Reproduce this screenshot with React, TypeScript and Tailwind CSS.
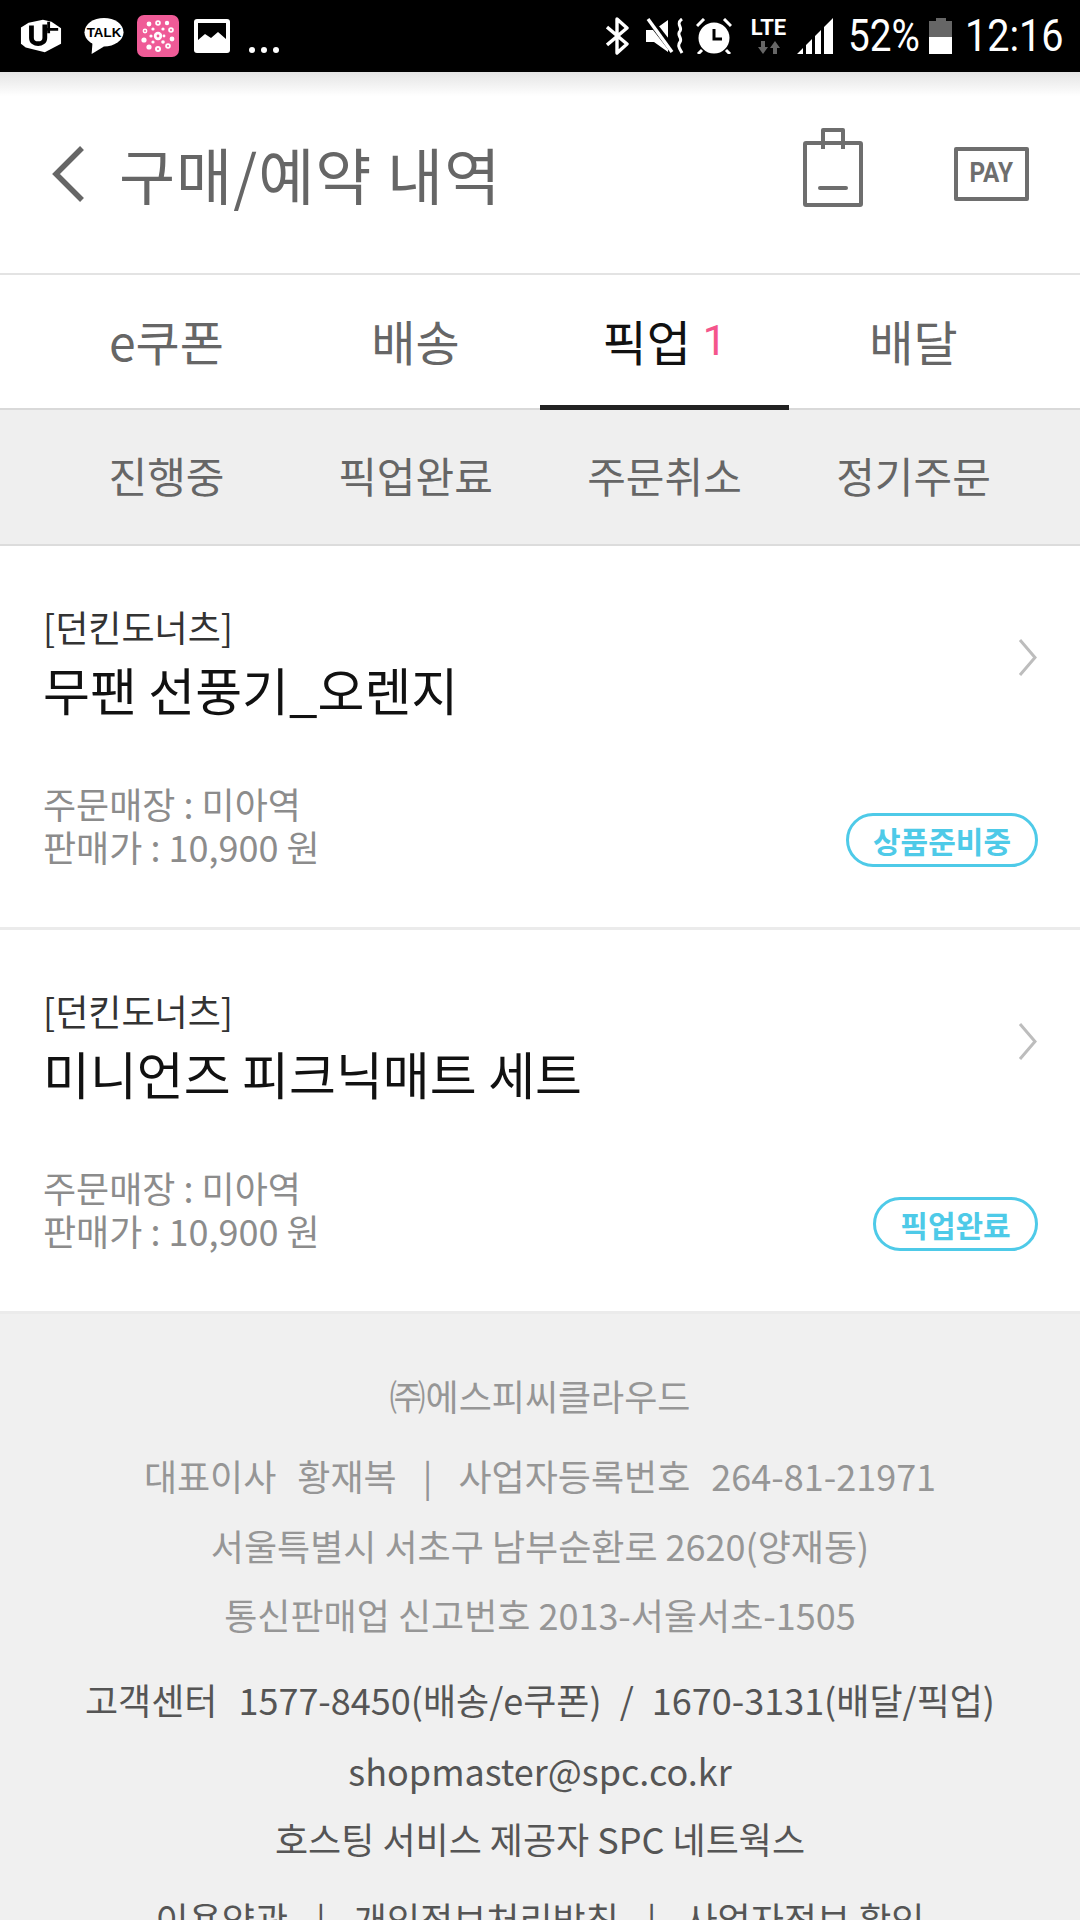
const font = { fontFamily: '"Noto Sans CJK KR", "Noto Sans", sans-serif' };
const roboto = { fontFamily: '"Roboto", sans-serif' };

const flowers: [number, number, number][] = [
  [21, 21, 4.2], [21, 8, 2.8], [30, 8, 2.2], [12, 9, 2.4], [34, 15, 2.8], [8, 16, 2.4],
  [35, 24, 2.4], [7, 25, 2.6], [31, 31, 2.8], [12, 32, 2.6], [21, 34, 3], [27, 21, 1.4], [14, 21, 1.6],
  [26, 14, 1.6], [16, 14, 1.6], [26, 27, 1.8], [16, 27, 1.6],
];

const StatusBar = () => (
  <div className="h-[72px] bg-black flex items-center justify-between pl-[20px] pr-[17px] text-white">
    <div className="flex items-center">
      <svg width="42" height="36" viewBox="0 0 44 36" fill="none">
        <path d="M9 4 L24 1 L33 3 L43 10 V26 L26 35 L6 30 L1 26 V9 Z" fill="#fff" />
        <path d="M12 7 V20 C12 28 26 28 26 20 V6" stroke="#000" strokeWidth="5" fill="none" />
        <path d="M30 3 V15 M27 11 H40" stroke="#000" strokeWidth="3" />
      </svg>
      <svg className="ml-[22px]" width="40" height="38" viewBox="0 0 42 38">
        <ellipse cx="21" cy="15" rx="20.5" ry="15" fill="#fff" />
        <path d="M9 25 L8 38 L21 30 Z" fill="#fff" />
        <text x="21" y="20" textAnchor="middle" fontSize="14" fontWeight="700" fill="#000" fontFamily="Liberation Sans">TALK</text>
      </svg>
      <div className="ml-[13px] w-[42px] h-[42px] rounded-[7px] bg-[#ef5b97]">
        <svg width="42" height="42" viewBox="0 0 42 42" fill="#fff">
          {flowers.map(([cx, cy, r]) => (
            <circle key={`${cx}-${cy}`} cx={cx} cy={cy} r={r} />
          ))}
          <circle cx="21" cy="21" r="1.4" fill="#ef5b97" />
          <circle cx="21" cy="8" r="1" fill="#ef5b97" />
          <circle cx="34" cy="15" r="1" fill="#ef5b97" />
          <circle cx="31" cy="31" r="1" fill="#ef5b97" />
          <circle cx="21" cy="34" r="1" fill="#ef5b97" />
          <circle cx="8" cy="16" r="0.9" fill="#ef5b97" />
        </svg>
      </div>
      <svg className="ml-[15px]" width="36" height="34" viewBox="0 0 36 34">
        <rect x="0" y="0" width="36" height="34" rx="3" fill="#fff" />
        <path d="M4 4 H32 V20 L24 13 L17 19 L11 15 L4 21 Z" fill="#000" />
      </svg>
      <div className="ml-[19px] mt-[28px] flex gap-[6px]">
        <span className="w-[6px] h-[6px] rounded-full bg-white" />
        <span className="w-[6px] h-[6px] rounded-full bg-white" />
        <span className="w-[6px] h-[6px] rounded-full bg-white" />
      </div>
    </div>
    <div className="flex items-center">
      <svg width="23" height="38" viewBox="0 0 23 38" fill="none" stroke="#fff" strokeWidth="3.4" strokeLinejoin="round">
        <path d="M1 10 L21 27 L11 36 V2 L21 11 L1 28" />
      </svg>
      <svg className="ml-[17px]" width="38" height="36" viewBox="0 0 38 36">
        <path d="M0 12 H8 L22 2 V34 L8 24 H0 Z" fill="#fff" />
        <path d="M3 1 L27 32" stroke="#000" strokeWidth="7" />
        <path d="M2 1 L26 34" stroke="#fff" strokeWidth="3.4" />
        <path d="M36 1 C29 6 37 9 34 13 C30 17 37 20 34 24 C31 28 34 31 36 35" stroke="#fff" strokeWidth="3" fill="none" />
      </svg>
      <svg className="ml-[12px]" width="36" height="36" viewBox="0 0 36 36" fill="none">
        <circle cx="18" cy="20" r="15.5" fill="#fff" />
        <path d="M18 11 V21 H26" stroke="#000" strokeWidth="3" />
        <path d="M1 8 L8 1 M35 8 L28 1 M6 32 L2 36 M30 32 L34 36" stroke="#fff" strokeWidth="3" />
      </svg>
      <div className="ml-[17px] w-[39px] flex flex-col items-center">
        <span className="text-[22px] leading-[20px] font-bold" style={roboto}>LTE</span>
        <svg className="mt-[3px]" width="22" height="13" viewBox="0 0 22 13" fill="#666">
          <path d="M3 0 H7 V6 H10 L5 13 L0 6 H3 Z M15 13 H19 V7 H22 L17 0 L12 7 H15 Z" />
        </svg>
      </div>
      <svg className="ml-[9px]" width="36" height="36" viewBox="0 0 36 36" fill="#fff">
        <path d="M0 36 L6 30 V36 Z M9 27 L15 21 V36 H9 Z M18 18 L24 12 V36 H18 Z M27 9 L36 0 V36 H27 Z" />
      </svg>
      <div className="ml-[15px] w-[71px]">
        <span className="block origin-left scale-x-[0.88] text-[44px] leading-none whitespace-nowrap" style={roboto}>52%</span>
      </div>
      <div className="ml-[10px] w-[23px] h-[36px] flex flex-col items-center">
        <div className="w-[10px] h-[3px] bg-[#666]" />
        <div className="w-[23px] h-[16px] bg-[#666]" />
        <div className="w-[23px] h-[17px] bg-white" />
      </div>
      <div className="ml-[13px] w-[98px]">
        <span className="block origin-left scale-x-[0.9] text-[44px] leading-none whitespace-nowrap" style={roboto}>12:16</span>
      </div>
    </div>
  </div>
);

const Header = () => (
  <div className="h-[203px] bg-gradient-to-b from-[#e4e4e4] via-white via-[12%] to-white border-b-2 border-[#e3e3e3] flex items-center pl-[51px] pr-[51px] pt-[2px]">
    <svg width="34" height="56" viewBox="0 0 34 56" fill="none" stroke="#666" strokeWidth="5.5">
      <path d="M31 2 L5 28 L31 54" />
    </svg>
    <h1 className="ml-[34px] text-[61px] leading-none text-[#666] font-normal tracking-[1px]">구매/예약 내역</h1>
    <svg className="ml-auto -mt-[13px]" width="60" height="79" viewBox="0 0 60 79" fill="none" stroke="#6e6e6e" strokeWidth="4" strokeLinejoin="round">
      <rect x="2" y="15" width="56" height="62" rx="1" />
      <path d="M20 21 V2 H40 V21" />
      <path d="M17 60 H43" strokeLinecap="round" />
    </svg>
    <div className="ml-[91px] w-[75px] h-[54px] border-[4px] border-[#6e6e6e] rounded-[2px] flex items-center justify-center">
      <span className="text-[27px] leading-none font-bold text-[#6e6e6e] scale-x-90" style={roboto}>PAY</span>
    </div>
  </div>
);

const tabs = ["e쿠폰", "배송", "픽업", "배달"];

const Tabs = () => (
  <div className="h-[135px] bg-white border-b-2 border-[#d9d9d9] grid grid-cols-4 px-[42px]">
    {tabs.map((t) =>
      t === "픽업" ? (
        <div key={t} className="h-[135px] pb-[1px] flex items-center justify-center gap-[12px] text-[48px] text-[#111] border-b-[5px] border-[#222]">
          <span>{t}</span>
          <span className="text-[#f4558b] text-[42px] leading-none mt-[2px]" style={roboto}>1</span>
        </div>
      ) : (
        <div key={t} className="pb-[6px] flex items-center justify-center text-[48px] text-[#666]">
          {t}
        </div>
      ),
    )}
  </div>
);

const subTabs = ["진행중", "픽업완료", "주문취소", "정기주문"];

const SubTabs = () => (
  <div className="h-[136px] bg-[#efefef] border-b-2 border-[#dcdcdc] grid grid-cols-4 px-[42px]">
    {subTabs.map((t) => (
      <div key={t} className="pb-[6px] flex items-center justify-center text-[42px] text-[#666]">
        {t}
      </div>
    ))}
  </div>
);

const OrderRow = ({ name, status, pillWidth }: { name: string; status: string; pillWidth: string }) => (
  <div className="h-[384px] bg-white border-b-[3px] border-[#ebebeb] pl-[43px] pr-[42px] pt-[54px]">
    <div className="flex items-start justify-between">
      <div>
        <p className="text-[36px] leading-[52px] text-[#333]">[던킨도너츠]</p>
        <p className="mt-[4px] text-[51px] leading-[66px] text-[#111]">{name}</p>
      </div>
      <svg className="mt-[39px]" width="20" height="37" viewBox="0 0 20 37" fill="none" stroke="#bdbdbd" strokeWidth="3">
        <path d="M2 1 L17 18.5 L2 36" />
      </svg>
    </div>
    <div className="mt-[60px] flex items-end justify-between">
      <div className="text-[36px] leading-[43px] text-[#8c8c8c]">
        <p>주문매장 : 미아역</p>
        <p>판매가 : 10,900 원</p>
      </div>
      <div className={`${pillWidth} h-[54px] rounded-full border-[3px] border-[#4ecae8] flex items-center justify-center text-[#4ecae8] text-[30px] font-bold mb-[1px]`}>
        {status}
      </div>
    </div>
  </div>
);

const Footer = () => (
  <div className="bg-[#f0f0f0] text-center pt-[55px] text-[36px] leading-[52px]">
    <p className="text-[#969696]">㈜에스피씨클라우드</p>
    <p className="mt-[28px] text-[#969696] flex justify-center">
      <span>대표이사</span>
      <span className="ml-[21px]">황재복</span>
      <span className="mx-[26px]">|</span>
      <span>사업자등록번호</span>
      <span className="ml-[21px]">264-81-21971</span>
    </p>
    <p className="mt-[18px] text-[#969696]">서울특별시 서초구 남부순환로 2620(양재동)</p>
    <p className="mt-[17px] text-[#969696]">통신판매업 신고번호 2013-서울서초-1505</p>
    <p className="mt-[33px] text-[#555] flex justify-center">
      <span>고객센터</span>
      <span className="ml-[21px]">1577-8450(배송/e쿠폰)</span>
      <span className="mx-[18px]">/</span>
      <span>1670-3131(배달/픽업)</span>
    </p>
    <p className="mt-[19px] text-[#555]">shopmaster@spc.co.kr</p>
    <p className="mt-[16px] text-[#555]">호스팅 서비스 제공자 SPC 네트웍스</p>
    <p className="mt-[28px] text-[#555] flex justify-center">
      <span>이용약관</span>
      <span className="mx-[28px]">|</span>
      <span>개인정보처리방침</span>
      <span className="mx-[28px]">|</span>
      <span>사업자정보 확인</span>
    </p>
  </div>
);

export default function App() {
  return (
    <div className="w-[1080px] h-[1920px] overflow-hidden bg-white" style={font}>
      <StatusBar />
      <Header />
      <Tabs />
      <SubTabs />
      <OrderRow name="무팬 선풍기_오렌지" status="상품준비중" pillWidth="w-[192px]" />
      <OrderRow name="미니언즈 피크닉매트 세트" status="픽업완료" pillWidth="w-[165px]" />
      <Footer />
    </div>
  );
}
